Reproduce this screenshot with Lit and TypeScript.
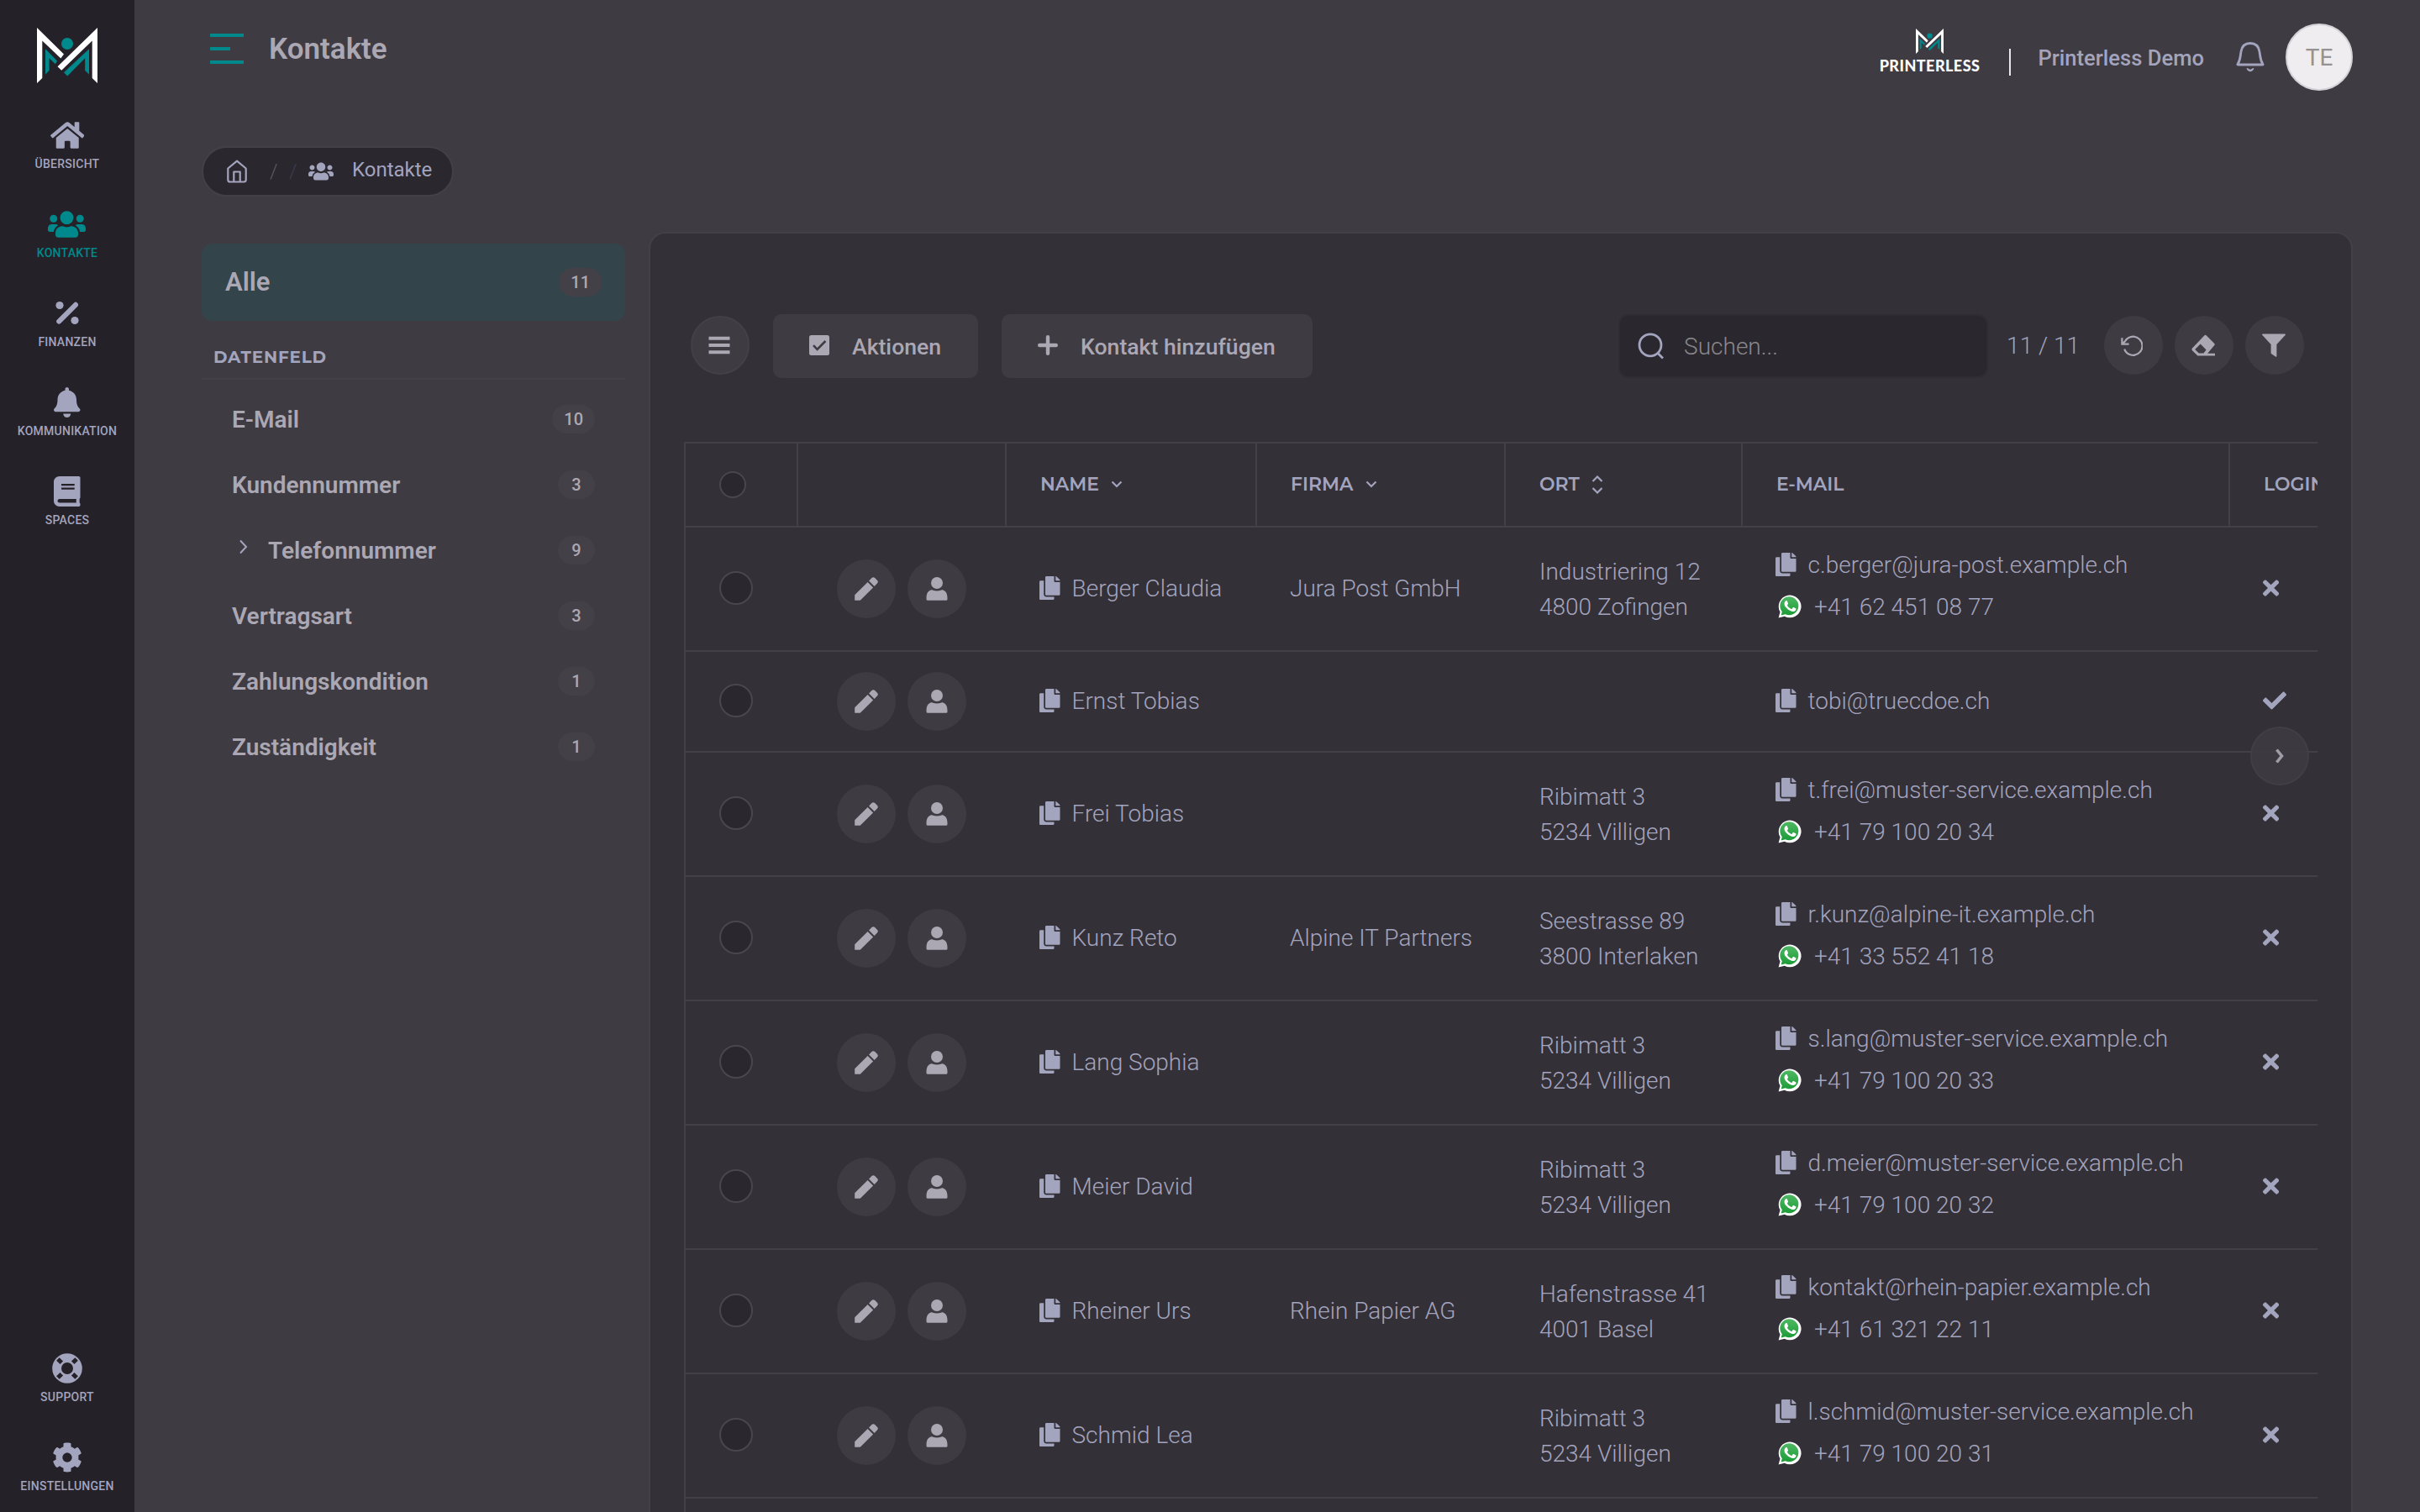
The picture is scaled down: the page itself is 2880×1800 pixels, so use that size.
import { LitElement, html, css, svg } from 'lit';
import { classMap } from 'lit/directives/class-map.js';

// Solid icons: [viewBox width, viewBox height, content]
const icons: Record<string, [number, number, unknown]> = {
  home: [576, 512, svg`<path d="M280.37 148.26L96 300.11V464a16 16 0 0 0 16 16l112.06-.29a16 16 0 0 0 15.92-16V368a16 16 0 0 1 16-16h64a16 16 0 0 1 16 16v95.64a16 16 0 0 0 16 16.05L464 480a16 16 0 0 0 16-16V300L295.67 148.26a12.19 12.19 0 0 0-15.3 0zM571.6 251.47L488 182.56V44.05a12 12 0 0 0-12-12h-56a12 12 0 0 0-12 12v72.61L318.47 43a48 48 0 0 0-61 0L4.34 251.47a12 12 0 0 0-1.6 16.9l25.5 31A12 12 0 0 0 45.15 301l235.22-193.74a12.19 12.19 0 0 1 15.3 0L530.9 301a12 12 0 0 0 16.9-1.6l25.5-31a12 12 0 0 0-1.7-16.93z"/>`],
  users: [640, 512, svg`<path d="M96 224c35.3 0 64-28.7 64-64s-28.7-64-64-64-64 28.7-64 64 28.7 64 64 64zm448 0c35.3 0 64-28.7 64-64s-28.7-64-64-64-64 28.7-64 64 28.7 64 64 64zm32 32h-64c-17.6 0-33.5 7.1-45.1 18.6 40.3 22.1 68.9 62 75.1 109.4h66c17.7 0 32-14.3 32-32v-32c0-35.3-28.7-64-64-64zm-256 0c61.9 0 112-50.1 112-112S381.9 32 320 32 208 82.1 208 144s50.1 112 112 112zm76.8 32h-8.3c-20.8 10-43.9 16-68.5 16s-47.6-6-68.5-16h-8.3C179.6 288 128 339.6 128 403.2V432c0 26.5 21.5 48 48 48h288c26.5 0 48-21.5 48-48v-28.8c0-63.6-51.6-115.2-115.2-115.2zm-223.7-13.4C161.5 263.1 145.6 256 128 256H64c-35.3 0-64 28.7-64 64v32c0 17.7 14.3 32 32 32h65.9c6.3-47.4 34.9-87.3 75.2-109.4z"/>`],
  percent: [36, 36, svg`<circle cx="9" cy="8.5" r="4.6"/><circle cx="27" cy="26.5" r="4.6"/><path d="M8.2 27.6L28 7.8" fill="none" stroke="currentColor" stroke-width="6" stroke-linecap="round"/>`],
  bell: [448, 512, svg`<path d="M224 512c35.32 0 63.97-28.65 63.97-64H160.03c0 35.35 28.65 64 63.97 64zm215.39-149.71c-19.32-20.76-55.47-51.99-55.47-154.29 0-77.7-54.48-139.9-127.94-155.16V32c0-17.67-14.32-32-31.98-32s-31.98 14.33-31.98 32v20.84C118.56 68.1 64.08 130.3 64.08 208c0 102.3-36.15 133.53-55.47 154.29-6 6.45-8.66 14.16-8.61 21.71.11 16.4 12.98 32 32.1 32h383.8c19.12 0 32-15.6 32.1-32 .05-7.55-2.61-15.27-8.61-21.71z"/>`],
  book: [448, 512, svg`<path d="M448 360V24c0-13.3-10.7-24-24-24H96C43 0 0 43 0 96v320c0 53 43 96 96 96h328c13.3 0 24-10.7 24-24v-16c0-7.5-3.5-14.3-8.9-18.7-4.2-15.4-4.2-59.3 0-74.7 5.4-4.3 8.9-11.1 8.9-18.6zM128 134c0-3.3 2.7-6 6-6h212c3.3 0 6 2.7 6 6v20c0 3.3-2.7 6-6 6H134c-3.3 0-6-2.7-6-6v-20zm0 64c0-3.3 2.7-6 6-6h212c3.3 0 6 2.7 6 6v20c0 3.3-2.7 6-6 6H134c-3.3 0-6-2.7-6-6v-20zm253.4 250H96c-17.7 0-32-14.3-32-32 0-17.6 14.4-32 32-32h285.4c-1.9 17.1-1.9 46.9 0 64z"/>`],
  support: [36, 36, svg`<circle cx="18" cy="18" r="12.4" fill="none" stroke="currentColor" stroke-width="10.8"/><g stroke="#242128" stroke-width="5"><path d="M6.9 6.9l4.4 4.4M24.7 24.7l4.4 4.4M29.1 6.9l-4.4 4.4M11.3 24.7l-4.4 4.4"/></g>`],
  cog: [512, 512, svg`<path d="M487.4 315.7l-42.6-24.6c4.3-23.2 4.3-47 0-70.2l42.6-24.6c4.9-2.8 7.1-8.6 5.5-14-11.1-35.6-30-67.8-54.7-94.6-3.8-4.1-10-5.1-14.8-2.3L380.8 110c-17.9-15.4-38.5-27.3-60.8-35.1V25.8c0-5.6-3.9-10.5-9.4-11.7-36.7-8.2-74.3-7.8-109.2 0-5.5 1.2-9.4 6.1-9.4 11.7V75c-22.2 7.9-42.8 19.8-60.8 35.1L88.7 85.5c-4.9-2.8-11-1.9-14.8 2.3-24.7 26.7-43.6 58.9-54.7 94.6-1.7 5.4.6 11.2 5.5 14L67.3 221c-4.3 23.2-4.3 47 0 70.2l-42.6 24.6c-4.9 2.8-7.1 8.6-5.5 14 11.1 35.6 30 67.8 54.7 94.6 3.8 4.1 10 5.1 14.8 2.3l42.6-24.6c17.9 15.4 38.5 27.3 60.8 35.1v49.2c0 5.6 3.9 10.5 9.4 11.7 36.7 8.2 74.3 7.8 109.2 0 5.5-1.2 9.4-6.1 9.4-11.7v-49.2c22.2-7.9 42.8-19.8 60.8-35.1l42.6 24.6c4.9 2.8 11 1.9 14.8-2.3 24.7-26.7 43.6-58.9 54.7-94.6 1.5-5.5-.7-11.3-5.6-14.1zM256 336c-44.1 0-80-35.9-80-80s35.9-80 80-80 80 35.9 80 80-35.9 80-80 80z"/>`],
  copy: [448, 512, svg`<path d="M320 448v40c0 13.255-10.745 24-24 24H24c-13.255 0-24-10.745-24-24V120c0-13.255 10.745-24 24-24h72v296c0 30.879 25.121 56 56 56h168zm0-344V0H152c-13.255 0-24 10.745-24 24v368c0 13.255 10.745 24 24 24h272c13.255 0 24-10.745 24-24V128H344c-13.2 0-24-10.8-24-24zm120.971-31.029L375.029 7.029A24 24 0 0 0 358.059 0H352v96h96v-6.059a24 24 0 0 0-7.029-16.97z"/>`],
  check: [512, 512, svg`<path d="M173.898 439.404l-166.4-166.4c-9.997-9.997-9.997-26.206 0-36.204l36.203-36.204c9.997-9.998 26.207-9.998 36.204 0L192 312.69 432.095 72.596c9.997-9.997 26.207-9.997 36.204 0l36.203 36.204c9.997 9.997 9.997 26.206 0 36.204l-294.4 294.401c-9.998 9.997-26.207 9.997-36.204-.001z"/>`],
  times: [352, 512, svg`<path d="M242.72 256l100.07-100.07c12.28-12.28 12.28-32.19 0-44.48l-22.24-22.24c-12.28-12.28-32.19-12.28-44.48 0L176 189.28 75.93 89.21c-12.28-12.28-32.19-12.28-44.48 0L9.21 111.45c-12.28 12.28-12.28 32.19 0 44.48L109.28 256 9.21 356.07c-12.28 12.28-12.28 32.19 0 44.48l22.24 22.24c12.28 12.28 32.2 12.28 44.48 0L176 322.72l100.07 100.07c12.28 12.28 32.2 12.28 44.48 0l22.24-22.24c12.28-12.28 12.28-32.19 0-44.48L242.72 256z"/>`],
  pencil: [30, 30, svg`<path d="M1.2 28.8V22.3L16.6 6.9l6.5 6.5L8 28.4q-.4.4-1 .4z"/><path d="M18.1 5.4l3.3-3.3q1.9-1.9 3.8 0l2.7 2.7q1.9 1.9 0 3.8l-3.3 3.3z"/>`],
  user: [30, 30, svg`<circle cx="15" cy="8" r="7"/><path d="M2.5 26.2C2.5 19.5 5 17 8.8 16.3c1.2-.1 2.6 1.3 6.2 1.3s5-1.4 6.2-1.3C25 17 27.5 19.5 27.5 26.2v1q0 1.6-1.6 1.6H4.1q-1.6 0-1.6-1.6z"/>`],
  menu: [26, 26, svg`<path d="M.5 4.8h25M.5 13h25M.5 21.2h25" stroke="currentColor" stroke-width="4"/>`],
  checkbox: [24, 24, svg`<rect width="24" height="24" rx="2.5"/><path d="M5 12.2l4.6 4.7L19.4 7" fill="none" stroke="#3f3b42" stroke-width="2.6"/>`],
  plus: [24, 24, svg`<path d="M12 2.2v19.6M2.2 12h19.6" stroke="currentColor" stroke-width="4.4" stroke-linecap="round"/>`],
  reset: [26, 26, svg`<path d="M4.2 16.6A11 11 0 1 0 5 7.2L1.6 10.5M1.4 3.2v7.4h8.2" fill="none" stroke="currentColor" stroke-width="2.2"/>`],
  eraser: [28, 28, svg`<path fill-rule="evenodd" d="M15.3 2.5q1.3-1.3 2.6 0l9.2 9.2q1.3 1.3 0 2.6L19.2 23.8H28v2.8H7.4L1 20.2q-1.2-1.4 0-2.8zM10.7 12.6L4.2 19l4.6 4.6h5.6l3.2-4z"/>`],
  filter: [28, 28, svg`<path d="M1 .4h26q1.5.3.6 1.7L17.4 12.9V27.3q-.4.9-1.4.3L11.2 24.2q-.6-.5-.6-1.2V12.900L.4 2.100Q-.5.7 1 .4z"/>`],
};

const icon = (name: string, height: number) => {
  const [w, h, body] = icons[name];
  return html`<svg class="icon" viewBox="0 0 ${w} ${h}" width=${(height * w) / h} height=${height}>${body}</svg>`;
};

const logo = (width: number, height: number) => html`
  <svg class="icon" viewBox="0 0 72 66" width=${width} height=${height} preserveAspectRatio="none">
    <path fill="#fff" d="M0 0L32 31.5L28.3 36.6L6.3 15.5V60L0 66zM72 0V66L65.7 60V15.5L29.2 50.8L24.5 46.3z"/>
    <circle cx="36" cy="19" r="7" fill="#00898c"/>
    <path fill="#00898c" d="M10 25.3L24 39.5L21.8 43.3L14.6 36.3V51L10 55.5zM62 25.3V55.5L57.2 51V36.3L36.2 57.5L32 53.3z"/>
  </svg>`;

const whatsapp = html`
  <svg class="icon" viewBox="0 0 28 28" width="28" height="28">
    <defs>
      <linearGradient id="wa" x1="0" y1="0" x2="0" y2="1">
        <stop offset="0" stop-color="#4fb863"/>
        <stop offset="1" stop-color="#1b9c38"/>
      </linearGradient>
    </defs>
    <path fill="#fff" d="M.6 27.6l1.9-7A13.4 13.4 0 1 1 7.7 25.7z"/>
    <path fill="url(#wa)" d="M3.7 24.5l1.1-4.3A11 11 0 1 1 8.6 23.2z"/>
    <path fill="#fff" d="M8.9 7.4c.5-.5 1.6-.5 1.9.1l1.2 2.8c.2.5-.1 1-.9 1.9-.3.3-.2.6 0 .9 1.1 1.8 2.5 3 4.5 3.8.4.2.7.1.9-.2l1.1-1.4c.3-.3.6-.4 1-.2l2.5 1.2c.4.2.5.4.4 1-.3 1.9-2.2 2.9-3.8 2.8-2-.2-5.2-1.4-7.9-4.5-2.5-3-3.1-5.8-.9-8.2z"/>
  </svg>`;

interface Contact {
  name: string;
  company?: string;
  city?: string[];
  email: string;
  phone?: string;
  login?: boolean;
}

export class AppRoot extends LitElement {

  static properties = {
    active: { type: String },
    contacts: { type: Array }
  };

  static styles = css`
    :host {
      display: flex;
      width: 2880px;
      height: 1800px;
      overflow: hidden;
      background-color: #3f3b42;
      color: #a3a4bd;
      font-family: Roboto, "Liberation Sans", sans-serif;
      font-size: 28px;
      font-weight: 300;
    }
    * {
      box-sizing: border-box;
    }
    .icon {
      display: block;
      flex: none;
      fill: currentColor;
    }

    .sidebar {
      width: 160px;
      flex: none;
      background-color: #242128;
      display: flex;
      flex-direction: column;
      align-items: center;
      gap: 12px;
      padding-top: 33px;
    }
    .sidebar .brand {
      height: 87px;
    }
    .sidebar .spacer {
      flex: 1;
    }
    .nav-item {
      height: 94px;
      padding-top: 11px;
      display: flex;
      flex-direction: column;
      align-items: center;
      gap: 8px;
      font-size: 14px;
      line-height: 16px;
      font-weight: 500;
      letter-spacing: 0.25px;
      text-transform: uppercase;
    }
    .nav-item.active {
      color: #00898c;
    }

    .main {
      flex: 1;
      min-width: 0;
      display: flex;
      flex-direction: column;
      padding-right: 80px;
    }
    .header {
      height: 174px;
      display: flex;
      justify-content: space-between;
      align-items: flex-start;
      padding-left: 90px;
    }
    .header-left {
      height: 116px;
      display: flex;
      align-items: center;
      gap: 30px;
    }
    .toggle {
      width: 40px;
      display: flex;
      flex-direction: column;
      gap: 12px;
    }
    .toggle span {
      height: 4px;
      background-color: #00898c;
    }
    .toggle span:nth-child(2) {
      width: 24px;
    }
    h1 {
      margin: 0;
      font-size: 35px;
      font-weight: 600;
      color: #aba8b4;
    }
    .header-right {
      height: 136px;
      display: flex;
      align-items: center;
    }
    .company {
      display: flex;
      flex-direction: column;
      align-items: center;
      gap: 2px;
      color: #fff;
      font-family: Lato, sans-serif;
      font-weight: 900;
      font-size: 18px;
      letter-spacing: 0.45px;
      line-height: 24px;
      padding-bottom: 13px;
    }
    .divider {
      width: 2px;
      height: 32px;
      margin: 12px 32px 0 35px;
      background-color: #e8e6ea;
    }
    .account {
      font-size: 25.6px;
      font-weight: 500;
      margin-right: 38px;
      padding-top: 2px;
    }
    .avatar {
      width: 80px;
      height: 80px;
      margin-left: 25px;
      border-radius: 50%;
      border: 2px solid #d4d2d6;
      background-color: #efedf0;
      color: #949294;
      font-weight: 400;
      display: flex;
      align-items: center;
      justify-content: center;
    }

    .breadcrumb {
      align-self: flex-start;
      margin-left: 80px;
      height: 60px;
      width: 300px;
      border: 2px solid #444047;
      border-radius: 30px;
      background-color: #2a272e;
      display: flex;
      align-items: center;
      padding-left: 28px;
      font-size: 24px;
      font-weight: 400;
      line-height: 28px;
    }
    .breadcrumb .slash {
      margin-left: 27px;
      width: 9px;
      color: #5d5960;
      font-weight: 300;
    }
    .breadcrumb .slash + .slash {
      margin-left: 14px;
      color: #3c3e50;
    }
    .breadcrumb .users {
      margin-left: 14px;
    }
    .breadcrumb .label {
      margin-left: 22px;
      padding-bottom: 4px;
    }

    .content {
      flex: 1;
      min-height: 0;
      display: flex;
      padding-left: 80px;
      gap: 28px;
    }
    .filters {
      width: 504px;
      flex: none;
      margin-top: 56px;
      font-weight: 600;
      color: #aba8b4;
    }
    .filter-all {
      height: 92px;
      border-radius: 12px;
      background-color: #34444b;
      display: flex;
      align-items: center;
      justify-content: space-between;
      padding: 0 28px 1px 28px;
      font-size: 31px;
    }
    .filter-title {
      height: 70px;
      padding: 29px 0 0 14px;
      border-bottom: 2px solid #444047;
      font-family: Montserrat, Inter, sans-serif;
      font-size: 20px;
      font-weight: 700;
      line-height: 28px;
      letter-spacing: 0.8px;
      color: #a3a4bd;
    }
    .filter-list {
      padding-top: 8px;
    }
    .filter-item {
      height: 78px;
      display: flex;
      align-items: center;
      padding: 0 36px;
    }
    .filter-item .chevron {
      margin: 0 22px 8px 7px;
      color: #a3a4bd;
    }
    .badge {
      margin-left: auto;
      min-width: 44px;
      height: 34px;
      padding: 0 14px;
      border-radius: 17px;
      background-color: #444047;
      font-size: 20px;
      font-weight: 500;
      line-height: 34px;
      text-align: center;
    }

    .card {
      position: relative;
      flex: 1;
      min-width: 0;
      margin-top: 42px;
      border: 2px solid #444047;
      border-bottom: 0;
      border-radius: 20px 20px 0 0;
      background-color: #343037;
      padding: 96px 40px 0 40px;
      display: flex;
      flex-direction: column;
    }
    .toolbar {
      height: 76px;
      display: flex;
      align-items: center;
      padding: 0 16px 0 8px;
    }
    .round {
      width: 70px;
      height: 70px;
      flex: none;
      border-radius: 50%;
      background-color: #3f3b42;
      color: #aba8b4;
      display: flex;
      align-items: center;
      justify-content: center;
    }
    .toolbar > .round {
      margin-bottom: 2px;
      padding-right: 2px;
    }
    .toolbar > .round.outlined {
      border: 2px solid #444047;
    }
    .toolbar > .round.reset {
      padding: 2px 4px 0 0;
    }
    .toolbar .round + .round {
      margin-left: 14px;
    }
    .button {
      height: 76px;
      margin-left: 28px;
      border-radius: 10px;
      background-color: #3f3b42;
      color: #aba8b4;
      display: flex;
      align-items: center;
      gap: 27px;
      padding: 0 44px 0 43px;
      font-size: 26.6px;
      font-weight: 500;
    }
    .button .icon {
      margin-bottom: 3px;
    }
    .search {
      width: 440px;
      height: 76px;
      margin-left: auto;
      border: 2px solid #302c33;
      border-radius: 12px;
      background-color: #2a272e;
      display: flex;
      align-items: center;
      gap: 23px;
      padding: 0 0 0 21px;
    }
    .search span {
      color: #8b888b;
    }
    .count {
      margin: 0 29px 2px 22px;
    }

    .table {
      flex: 1;
      margin-top: 76px;
      width: 1944px;
      overflow: hidden;
      border-top: 2px solid #444047;
      border-left: 2px solid #444047;
    }
    .row {
      width: 2100px;
      display: grid;
      grid-template-columns: 134px 248px 298px 296px 282px 580px 262px;
      height: 148px;
      border-bottom: 2px solid #444047;
    }
    .row.compact {
      height: 120px;
    }
    .row.head {
      height: 100px;
      font-family: Montserrat, Inter, sans-serif;
      font-size: 22px;
      font-weight: 600;
    }
    .cell {
      display: flex;
      align-items: center;
      padding: 0 0 1px 39px;
    }
    .cell.mark {
      padding: 0 0 3px 39px;
    }
    .cell.select {
      padding: 0 0 2px 40px;
    }
    .head .cell {
      gap: 14px;
      padding-left: 40px;
      border-right: 2px solid #444047;
    }
    .cell.stack {
      flex-direction: column;
      align-items: flex-start;
      justify-content: center;
      padding: 1px 0 0 40px;
      line-height: 42px;
    }
    .cell.contact {
      padding: 0 0 7px 39px;
    }
    .compact .cell.contact {
      padding-bottom: 1px;
    }
    .cell.actions {
      gap: 14px;
      padding: 0 0 0 46px;
    }
    .line {
      height: 50px;
      display: flex;
      align-items: center;
      gap: 14px;
    }
    .line .icon {
      margin-bottom: 2px;
    }
    .line.phone {
      padding-left: 3px;
      gap: 15px;
    }
    .radio {
      width: 40px;
      height: 40px;
      border-radius: 50%;
      border: 2px solid #4a464e;
      background-color: #2a272e;
    }
    .head .radio {
      width: 32px;
      height: 32px;
    }
    .scroll-next {
      position: absolute;
      top: 587px;
      right: 50px;
      border: 2px solid #444047;
      opacity: 0.9;
    }
  `;

  active: string;
  contacts: Contact[];

  constructor() {
    super();
    this.active = 'Kontakte';
    this.contacts = [
      { name: 'Berger Claudia', company: 'Jura Post GmbH', city: ['Industriering 12', '4800 Zofingen'], email: 'c.berger@jura-post.example.ch', phone: '+41 62 451 08 77' },
      { name: 'Ernst Tobias', email: 'tobi@truecdoe.ch', login: true },
      { name: 'Frei Tobias', city: ['Ribimatt 3', '5234 Villigen'], email: 't.frei@muster-service.example.ch', phone: '+41 79 100 20 34' },
      { name: 'Kunz Reto', company: 'Alpine IT Partners', city: ['Seestrasse 89', '3800 Interlaken'], email: 'r.kunz@alpine-it.example.ch', phone: '+41 33 552 41 18' },
      { name: 'Lang Sophia', city: ['Ribimatt 3', '5234 Villigen'], email: 's.lang@muster-service.example.ch', phone: '+41 79 100 20 33' },
      { name: 'Meier David', city: ['Ribimatt 3', '5234 Villigen'], email: 'd.meier@muster-service.example.ch', phone: '+41 79 100 20 32' },
      { name: 'Rheiner Urs', company: 'Rhein Papier AG', city: ['Hafenstrasse 41', '4001 Basel'], email: 'kontakt@rhein-papier.example.ch', phone: '+41 61 321 22 11' },
      { name: 'Schmid Lea', city: ['Ribimatt 3', '5234 Villigen'], email: 'l.schmid@muster-service.example.ch', phone: '+41 79 100 20 31' }
    ];
  }

  navItem(name: string, label: string) {
    return html`
      <div class=${classMap({ 'nav-item': true, active: label === this.active })}>
        ${icon(name, 36)}
        <span>${label}</span>
      </div>
    `;
  }

  filterItem(label: string, count: number, expandable = false) {
    return html`
      <div class="filter-item">
        ${expandable ? html`
          <svg class="icon chevron" width="14" height="18" viewBox="0 0 14 18"><path d="M3 1.500l7 7.500l-7 7.500" fill="none" stroke="currentColor" stroke-width="2"/></svg>
        ` : ''}
        <span>${label}</span>
        <span class="badge">${count}</span>
      </div>
    `;
  }

  contactRow(c: Contact) {
    return html`
      <div class=${classMap({ row: true, compact: !c.phone })}>
        <div class="cell select"><span class="radio"></span></div>
        <div class="cell actions">
          <span class="round">${icon('pencil', 30)}</span>
          <span class="round">${icon('user', 30)}</span>
        </div>
        <div class="cell"><div class="line">${icon('copy', 28)}<span>${c.name}</span></div></div>
        <div class="cell">${c.company ?? ''}</div>
        <div class="cell stack">${(c.city ?? []).map((line) => html`<span>${line}</span>`)}</div>
        <div class="cell stack contact">
          <div class="line">${icon('copy', 28)}<span>${c.email}</span></div>
          ${c.phone ? html`<div class="line phone">${whatsapp}<span>${c.phone}</span></div>` : ''}
        </div>
        <div class="cell mark">${icon(c.login ? 'check' : 'times', 28)}</div>
      </div>
    `;
  }

  render() {
    const down = html`<svg class="icon" width="14" height="10" viewBox="0 0 14 10"><path d="M1.5 1.5l5.5 5.5l5.5-5.5" fill="none" stroke="currentColor" stroke-width="2.2"/></svg>`;
    const both = html`<svg class="icon" width="14" height="22" viewBox="0 0 14 22"><path d="M1.5 7l5.5-5.5l5.5 5.5M1.5 15l5.5 5.5l5.5-5.5" fill="none" stroke="currentColor" stroke-width="2.2"/></svg>`;

    return html`
      <nav class="sidebar">
        <div class="brand">${logo(72, 66)}</div>
        ${this.navItem('home', 'Übersicht')}
        ${this.navItem('users', 'Kontakte')}
        ${this.navItem('percent', 'Finanzen')}
        ${this.navItem('bell', 'Kommunikation')}
        ${this.navItem('book', 'Spaces')}
        <div class="spacer"></div>
        ${this.navItem('support', 'Support')}
        ${this.navItem('cog', 'Einstellungen')}
      </nav>

      <div class="main">
        <header class="header">
          <div class="header-left">
            <div class="toggle"><span></span><span></span><span></span></div>
            <h1>Kontakte</h1>
          </div>
          <div class="header-right">
            <div class="company">${logo(33, 30)}<span>PRINTERLESS</span></div>
            <div class="divider"></div>
            <span class="account">Printerless Demo</span>
            <svg class="icon" width="34" height="37" viewBox="0 0 34 37">
              <path d="M2 26.5C5.5 21 5 17 6 11.5C7 5 11 1.5 17 1.5S27 5 28 11.5C29 17 28.5 21 32 26.5Q32.5 27 31.5 27H2.5Q1.5 27 2 26.5z" fill="none" stroke="currentColor" stroke-width="2.8" stroke-linejoin="round"/>
              <path d="M12.5 31.5C14.5 36.5 19.5 36.5 21.5 31.5q-1-1-2.2 0c-1.3 1.5-3.3 1.5-4.6 0q-1.2-1-2.2 0z"/>
            </svg>
            <div class="avatar">TE</div>
          </div>
        </header>

        <div class="breadcrumb">
          <svg class="icon" width="24" height="28" viewBox="0 0 24 28">
            <path d="M1.3 10.5L12 1.7l10.7 8.8V24q0 2.5-2.5 2.5H3.8Q1.3 26.5 1.3 24zM8.3 26.5V14.5h7.4V26.5" fill="none" stroke="currentColor" stroke-width="2.2" stroke-linejoin="round"/>
          </svg>
          <span class="slash">/</span>
          <span class="slash">/</span>
          <span class="users">${icon('users', 24)}</span>
          <span class="label">Kontakte</span>
        </div>

        <div class="content">
          <aside class="filters">
            <div class="filter-all"><span>Alle</span><span class="badge">11</span></div>
            <div class="filter-title">DATENFELD</div>
            <div class="filter-list">
              ${this.filterItem('E-Mail', 10)}
              ${this.filterItem('Kundennummer', 3)}
              ${this.filterItem('Telefonnummer', 9, true)}
              ${this.filterItem('Vertragsart', 3)}
              ${this.filterItem('Zahlungskondition', 1)}
              ${this.filterItem('Zuständigkeit', 1)}
            </div>
          </aside>

          <section class="card">
            <div class="toolbar">
              <span class="round outlined">${icon('menu', 26)}</span>
              <div class="button">${icon('checkbox', 24)}<span>Aktionen</span></div>
              <div class="button">${icon('plus', 24)}<span>Kontakt hinzufügen</span></div>
              <div class="search">
                <svg class="icon" width="32" height="32" viewBox="0 0 32 32">
                  <path d="M15 1.8a13 13 0 1 1 0 26a13 13 0 0 1 0-26zM24 24.5l6 6" fill="none" stroke="currentColor" stroke-width="2.8"/>
                </svg>
                <span>Suchen...</span>
              </div>
              <span class="count">11 / 11</span>
              <span class="round reset">${icon('reset', 26)}</span>
              <span class="round">${icon('eraser', 28)}</span>
              <span class="round">${icon('filter', 28)}</span>
            </div>

            <div class="table">
              <div class="row head">
                <div class="cell"><span class="radio"></span></div>
                <div class="cell"></div>
                <div class="cell">NAME ${down}</div>
                <div class="cell">FIRMA ${down}</div>
                <div class="cell">ORT ${both}</div>
                <div class="cell">E-MAIL</div>
                <div class="cell">LOGIN</div>
              </div>
              ${this.contacts.map((c) => this.contactRow(c))}
            </div>

            <span class="round scroll-next">
              <svg class="icon" width="12" height="18" viewBox="0 0 12 18"><path d="M2.5 1.5l6 7.5l-6 7.5" fill="none" stroke="currentColor" stroke-width="3.6"/></svg>
            </span>
          </section>
        </div>
      </div>
    `;
  }
}

customElements.define('app-root', AppRoot);
